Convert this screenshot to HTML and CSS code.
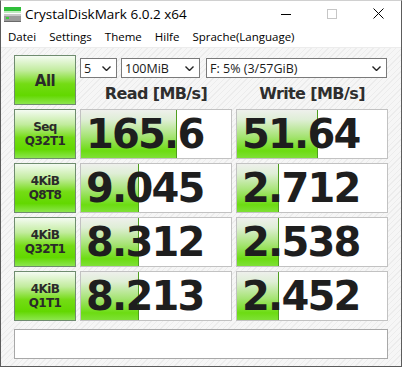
FILE: index.html
```html
<!doctype html>
<html lang="de">
  <head>
    <meta charset="UTF-8" />
    <title>CrystalDiskMark 6.0.2 x64</title>
    <link rel="stylesheet" href="styles.css">
  </head>
  <body>
    <div class="window">
      <div class="titlebar">
        <svg class="app-icon" width="17" height="15" viewBox="0 0 17 15">
          <rect x="0" y="0" width="17" height="4" fill="#2fbf3a" />
          <rect x="0" y="4" width="17" height="2" fill="#bfe8bf" />
          <rect x="0" y="7" width="17" height="8" fill="#9a9a9a" />
          <rect x="0" y="7" width="17" height="2" fill="#c8c8c8" />
          <rect x="2" y="10" width="3" height="2" fill="#37d037" />
          <rect x="0" y="14" width="17" height="1" fill="#6a6a6a" />
        </svg>
        <span class="title">CrystalDiskMark 6.0.2 x64</span>
        <div class="controls">
          <span class="ctl">
            <svg width="10" height="10" viewBox="0 0 10 10"><path d="M0 5.5h10" stroke="#000" /></svg>
          </span>
          <span class="ctl">
            <svg width="10" height="10" viewBox="0 0 10 10"><rect x="0.5" y="0.5" width="9" height="9" fill="none" stroke="#c6c6c6" /></svg>
          </span>
          <span class="ctl">
            <svg width="11" height="11" viewBox="0 0 11 11"><path d="M0.5 0.5l10 10M10.5 0.5l-10 10" stroke="#000" /></svg>
          </span>
        </div>
      </div>

      <nav class="menubar">
        <span>Datei</span>
        <span>Settings</span>
        <span>Theme</span>
        <span>Hilfe</span>
        <span>Sprache(Language)</span>
      </nav>

      <main class="client">
        <div class="board">
          <div class="tile all">All</div>
          <div class="head">
            <div class="selects">
              <div class="select s-count">5<svg class="chev" viewBox="0 0 9 5"><path d="M0.5 0.5l4 4 4-4" fill="none" stroke="#222" stroke-width="1.4" /></svg></div>
              <div class="select s-size">100MiB<svg class="chev" viewBox="0 0 9 5"><path d="M0.5 0.5l4 4 4-4" fill="none" stroke="#222" stroke-width="1.4" /></svg></div>
              <div class="select s-drive">F: 5% (3/57GiB)<svg class="chev" viewBox="0 0 9 5"><path d="M0.5 0.5l4 4 4-4" fill="none" stroke="#222" stroke-width="1.4" /></svg></div>
            </div>
            <div class="col-titles">
              <span>Read [MB/s]</span>
              <span>Write [MB/s]</span>
            </div>
          </div>

          <div class="tile">Seq<br>Q32T1</div>
          <div class="cell"><div class="bar" style="width: 96px"></div><span class="val">165.6</span></div>
          <div class="cell"><div class="bar" style="width: 81px"></div><span class="val">51.64</span></div>

          <div class="tile">4KiB<br>Q8T8</div>
          <div class="cell"><div class="bar" style="width: 58px"></div><span class="val">9.045</span></div>
          <div class="cell"><div class="bar" style="width: 42px"></div><span class="val">2.712</span></div>

          <div class="tile">4KiB<br>Q32T1</div>
          <div class="cell"><div class="bar" style="width: 58px"></div><span class="val">8.312</span></div>
          <div class="cell"><div class="bar" style="width: 42px"></div><span class="val">2.538</span></div>

          <div class="tile">4KiB<br>Q1T1</div>
          <div class="cell"><div class="bar" style="width: 58px"></div><span class="val">8.213</span></div>
          <div class="cell"><div class="bar" style="width: 42px"></div><span class="val">2.452</span></div>
        </div>
        <div class="status"></div>
      </main>
    </div>
  </body>
</html>
```

FILE: styles.css
```css
html,
body {
  margin: 0;
  padding: 0;
  background: #ffffff;
}

.window {
  width: 402px;
  height: 367px;
  box-sizing: border-box;
  display: flex;
  flex-direction: column;
  border: 1px solid #5c5c5c;
  border-top-color: #d0d0d0;
  font-family: "Open Sans", "Noto Sans", sans-serif;
  font-size: 11.5px;
  color: #000000;
}

/* title bar */
.titlebar {
  height: 25px;
  display: flex;
  align-items: center;
  background: #ffffff;
}
.app-icon {
  margin-left: 3px;
  margin-top: 1px;
}
.title {
  margin-left: 4px;
  font-size: 13.5px;
}
.controls {
  margin-left: auto;
  display: flex;
}
.ctl {
  width: 46px;
  height: 25px;
  display: flex;
  align-items: center;
  justify-content: center;
}

/* menu */
.menubar {
  height: 21px;
  display: flex;
  align-items: center;
  gap: 13px;
  padding-left: 7px;
  background: #ffffff;
}

/* client area */
.client {
  flex: 1;
  padding: 7px 0 0 13px;
  background: repeating-linear-gradient(135deg, #f6f6f6 0 3px, #ececec 3px 4px);
  border-top: 1px solid #ececec;
}

.board {
  display: grid;
  grid-template-columns: 62px 152px 152px;
  grid-auto-rows: 50px;
  column-gap: 4px;
  row-gap: 4px;
}

.tile {
  box-sizing: border-box;
  border: 1px solid #6f8c6f;
  background: linear-gradient(to bottom, #f4fbf2 0%, #c2ec9e 30%, #74dc14 58%, #62d800 82%, #8ce64e 100%);
  display: flex;
  align-items: center;
  justify-content: center;
  text-align: center;
  font-family: "DejaVu Sans", sans-serif;
  font-weight: bold;
  font-size: 12px;
  line-height: 14px;
  color: #2a2a2a;
  letter-spacing: -0.6px;
}
.tile.all {
  font-size: 15px;
  letter-spacing: -0.5px;
  padding-top: 2px;
}

.head {
  grid-column: 2 / 4;
  display: flex;
  flex-direction: column;
}
.selects {
  display: flex;
  margin-top: 3px;
  height: 20px;
}
.select {
  box-sizing: border-box;
  height: 20px;
  border: 1px solid #7a7a7a;
  background: #ffffff;
  display: flex;
  align-items: center;
  padding-left: 3px;
  font-size: 12.5px;
  color: #1a1a1a;
}
.chev {
  width: 9px;
  height: 5px;
  margin-left: auto;
  margin-right: 5px;
}
.s-count {
  width: 37px;
}
.s-size {
  width: 79px;
  margin-left: 4px;
}
.s-drive {
  width: 181px;
  margin-left: 6px;
}

.col-titles {
  flex: 1;
  display: grid;
  grid-template-columns: 152px 152px;
  column-gap: 4px;
  align-items: center;
  text-align: center;
  font-family: "DejaVu Sans", sans-serif;
  font-weight: bold;
  font-size: 16px;
  letter-spacing: -0.6px;
  color: #2e2e2e;
  padding-top: 3px;
}

.cell {
  position: relative;
  box-sizing: border-box;
  border: 1px solid #c2c2c2;
  background: #ffffff;
  display: flex;
  align-items: center;
  padding-left: 5px;
}
.bar {
  position: absolute;
  left: 0;
  top: 0;
  bottom: 0;
  box-sizing: border-box;
  border-right: 1px solid #4f9e1e;
  background: linear-gradient(to bottom, #eef0ec 0%, #dfeed6 20%, #a6e474 55%, #6cdc12 85%, #7ee036 100%);
}
.val {
  position: relative;
  font-family: "DejaVu Sans", sans-serif;
  font-weight: bold;
  font-size: 40px;
  letter-spacing: -1.8px;
  color: #1e1e1e;
  line-height: 1;
}

.status {
  box-sizing: border-box;
  width: 374px;
  height: 30px;
  margin-top: 8px;
  border: 1px solid #a8a8a8;
  background: #ffffff;
}
```
